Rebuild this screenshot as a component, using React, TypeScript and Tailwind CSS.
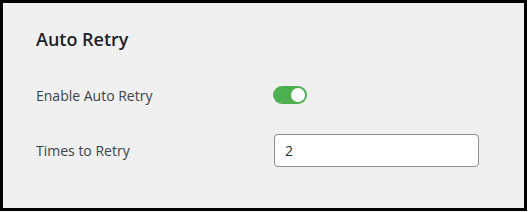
export default function App() {
  return (
    <div className="w-[528px] h-[212px] bg-white">
      <div
        className="w-[527px] h-[211px] border-[3px] border-black bg-[#f0f0f0] pl-[33px] pr-[45px] pt-[22px] text-[#3c434a]"
        style={{ fontFamily: '"Open Sans", "Noto Sans", sans-serif' }}
      >
        <h2 className="text-[18px] font-semibold text-[#1d2327] leading-[28px]">Auto Retry</h2>
        <div className="mt-[30px] flex items-center h-[24px]">
          <span className="w-[237px] text-[14px]">Enable Auto Retry</span>
          <button className="relative w-[34px] h-[18px] rounded-full bg-[#4caf50]">
            <span className="absolute right-[2px] top-[2px] w-[14px] h-[14px] rounded-full bg-white" />
          </button>
        </div>
        <div className="mt-[26px] flex items-center h-[34px]">
          <span className="w-[238px] text-[14px]">Times to Retry</span>
          <input
            defaultValue="2"
            className="w-[205px] h-[33px] rounded-[4px] border border-[#8c8f94] bg-white px-[10px] text-[14px] text-[#2c3338] outline-none"
          />
        </div>
      </div>
    </div>
  )
}
